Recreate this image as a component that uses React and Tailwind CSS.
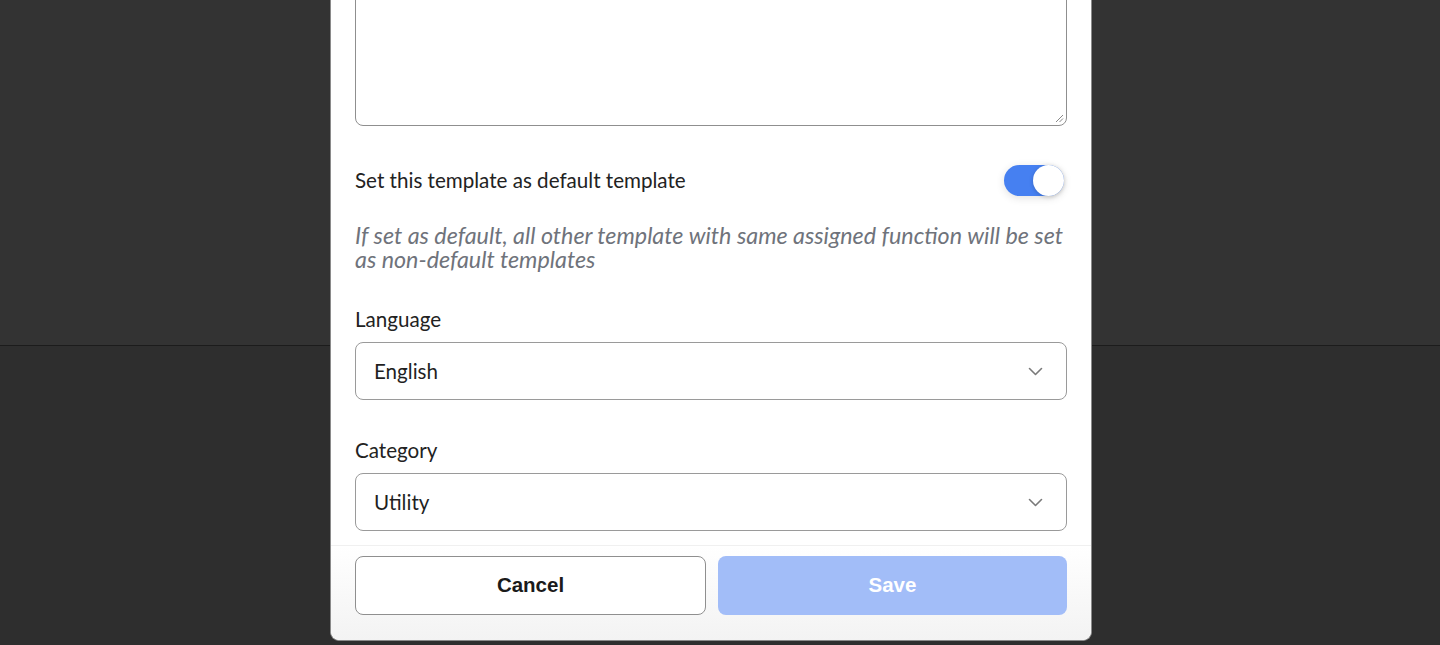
import React, { useState } from 'react';

const lato = { fontFamily: 'Lato, "Open Sans", sans-serif' };
const sans = { fontFamily: '"Liberation Sans", Arial, sans-serif' };

const Chevron = () => (
  <svg width="15" height="9" viewBox="0 0 15 9" fill="none">
    <polyline points="1.5,1.5 7.5,7.5 13.5,1.5" stroke="#7a7a7a" strokeWidth="1.6" strokeLinecap="round" strokeLinejoin="round" />
  </svg>
);

const SelectBox = ({ value }) => (
  <div className="flex items-center justify-between h-[58px] rounded-lg border border-[#9a9a9a] bg-white pl-[18px] pr-[23px]">
    <span className="text-[20.6px] text-[#1f1f1f]">{value}</span>
    <Chevron />
  </div>
);

const App = () => {
  const [isDefault, setIsDefault] = useState(true);

  return (
    <div className="relative h-[645px] w-[1440px] overflow-hidden" style={lato}>
      {/* fondo de la página */}
      <div className="flex flex-col h-full">
        <div className="h-[346px] bg-[#333333] border-b border-[#1c1c1c]"></div>
        <div className="flex-1 bg-[#2e2e2e]"></div>
      </div>

      {/* modal */}
      <div className="absolute left-[330px] top-0 w-[762px] h-[641px] flex flex-col bg-white rounded-b-[9px] border-x border-b border-[#8a8a8a]">
        <div className="flex-1 overflow-hidden px-6">
          <div className="-mt-[30px] h-[156px] rounded-lg border border-[#8f8f8f] relative">
            <svg className="absolute right-[2px] bottom-[2px]" width="10" height="10" viewBox="0 0 10 10">
              <line x1="9" y1="2" x2="2" y2="9" stroke="#888" strokeWidth="1" />
              <line x1="9" y1="5.5" x2="5.5" y2="9" stroke="#888" strokeWidth="1" />
            </svg>
          </div>

          <div className="mt-[38px] flex items-center justify-between h-[32px]">
            <span className="text-[20.6px] text-[#222]">Set this template as default template</span>
            <button
              onClick={() => setIsDefault(!isDefault)}
              className={`relative w-[60px] h-[31px] rounded-full mr-[3px] shadow-[0_2px_8px_rgba(0,0,0,0.12)] ${isDefault ? 'bg-[#4680f1]' : 'bg-gray-300'}`}
            >
              <span className={`absolute top-0 h-[31px] w-[31px] rounded-full bg-white shadow-[0_1px_4px_rgba(0,0,0,0.2)] ${isDefault ? 'right-0' : 'left-0'}`}></span>
            </button>
          </div>

          <p className="mt-[27px] text-[23.3px] leading-[24px] italic text-[#6f737b]">
            If set as default, all other template with same assigned function will be set as non-default templates
          </p>

          <div className="mt-[36px] text-[20.6px] leading-[24px] text-[#222]">Language</div>
          <div className="mt-[11px]">
            <SelectBox value="English" />
          </div>

          <div className="mt-[38px] text-[20.6px] leading-[24px] text-[#222]">Category</div>
          <div className="mt-[11px]">
            <SelectBox value="Utility" />
          </div>
        </div>

        <div className="h-[95px] border-t border-[#f0f0f0] bg-gradient-to-b from-white to-[#f3f3f3] rounded-b-[9px] px-6 pt-[10px] flex gap-3">
          <button
            className="flex-1 h-[59px] rounded-lg border border-[#8f8f8f] bg-white text-[20.5px] font-bold text-[#1a1a1a]"
            style={sans}
          >
            Cancel
          </button>
          <button
            className="flex-1 h-[59px] rounded-lg bg-[#a2bdf8] text-[20.5px] font-bold text-white"
            style={sans}
          >
            Save
          </button>
        </div>
      </div>
    </div>
  );
};

export default App;
